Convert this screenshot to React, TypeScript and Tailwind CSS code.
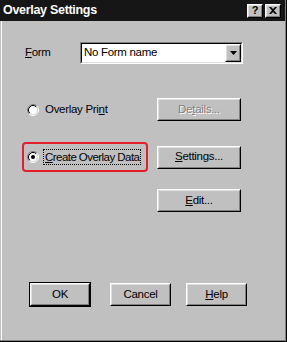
import React from "react";

const font = "font-['Liberation_Sans',Arial,sans-serif]";

function Raised({
  className = "",
  children,
}: {
  className?: string;
  children?: React.ReactNode;
}) {
  return (
    <div
      className={`border border-t-white border-l-white border-r-black border-b-black ${className}`}
    >
      <div className="flex h-full w-full items-center justify-center border border-t-[#dfdfdf] border-l-[#dfdfdf] border-r-[#808080] border-b-[#808080] bg-[#c0c0c0]">
        {children}
      </div>
    </div>
  );
}

function Radio({ checked }: { checked?: boolean }) {
  return (
    <svg width="12" height="12" viewBox="0 0 12 12" className="shrink-0">
      <circle cx="6" cy="6" r="4.2" fill="#fff" />
      <path d="M2.11 9.89 A5.5 5.5 0 0 1 9.89 2.11" fill="none" stroke="#808080" />
      <path d="M9.89 2.11 A5.5 5.5 0 0 1 2.11 9.89" fill="none" stroke="#fff" />
      <path d="M2.82 9.18 A4.5 4.5 0 0 1 9.18 2.82" fill="none" stroke="#000" />
      <path d="M9.18 2.82 A4.5 4.5 0 0 1 2.82 9.18" fill="none" stroke="#dfdfdf" />
      {checked && <circle cx="6" cy="6" r="2" fill="#000" />}
    </svg>
  );
}

function Btn({
  children,
  className = "",
}: {
  children: React.ReactNode;
  className?: string;
}) {
  return (
    <Raised className={`h-[23px] whitespace-nowrap text-black ${className}`}>
      {children}
    </Raised>
  );
}

export default function App() {
  return (
    <div
      className={`${font} h-[342px] w-[287px] border-r border-b border-r-black border-b-black bg-[#c0c0c0]`}
    >
      <div className="flex h-full flex-col border-r border-b border-r-[#808080] border-b-[#808080]">
        {/* title bar */}
        <div className="flex h-[21px] items-center bg-[#161616] pl-[3px] pr-[4px]">
          <span className="text-[12.5px] font-bold tracking-[-0.3px] text-white">
            Overlay Settings
          </span>
          <div className="ml-auto flex gap-[2px]">
            <Raised className="h-[14px] w-[16px]">
              <span className="text-[11px] font-bold leading-none text-black">?</span>
            </Raised>
            <Raised className="h-[14px] w-[16px]">
              <svg width="8" height="7" viewBox="0 0 8 7">
                <path d="M0 0h2l2 2 2-2h2L5 3.5 8 7H6L4 5 2 7H0l3-3.5z" fill="#000" />
              </svg>
            </Raised>
          </div>
        </div>

        {/* body */}
        <div className="ml-px flex flex-1 flex-col whitespace-nowrap border-l border-l-white text-[11.5px] tracking-[-0.3px] text-black">
          <div className="mt-[21px] flex items-center pl-[23px]">
            <span className="w-[55px]">
              <span className="underline">F</span>orm
            </span>
            <div className="h-[22px] w-[163px] border border-t-[#808080] border-l-[#808080] border-r-white border-b-white">
              <div className="flex h-full items-center border border-t-black border-l-black border-r-[#dfdfdf] border-b-[#dfdfdf] bg-white pl-[2px]">
                <span className="flex-1">No Form name</span>
                <Raised className="h-[18px] w-[16px]">
                  <svg width="7" height="4" viewBox="0 0 7 4">
                    <path d="M0 0h7L3.5 4z" fill="#000" />
                  </svg>
                </Raised>
              </div>
            </div>
          </div>

          <div className="mt-[34px] flex items-center pl-[20px]">
            <div className="flex w-[126px] items-center pl-[5px]">
              <Radio />
              <span className="ml-[6px]">
                Overlay Pri<span className="underline">n</span>t
              </span>
            </div>
            <Btn className="ml-[9px] w-[84px]">
              <span className="text-[#808080] [text-shadow:1px_1px_0_#fff]">
                De<span className="underline">t</span>ails...
              </span>
            </Btn>
          </div>

          <div className="mt-[21px] flex items-center pl-[20px]">
            <div className="flex h-[30px] w-[126px] items-center rounded-[4px] border-2 border-[#e41f2b] pl-[3px]">
              <Radio checked />
              <span className="ml-[4px] border border-dotted border-black px-px leading-[14px] tracking-[-0.55px]">
                <span className="underline">C</span>reate Overlay Data
              </span>
            </div>
            <Btn className="ml-[9px] w-[84px]">
              <span>
                <span className="underline">S</span>ettings...
              </span>
            </Btn>
          </div>

          <div className="mt-[17px] flex pl-[155px]">
            <Btn className="w-[84px]">
              <span>
                <span className="underline">E</span>dit...
              </span>
            </Btn>
          </div>

          <div className="mt-auto mb-[33px] flex items-center pl-[27px]">
            <div className="border border-black">
              <Btn className="w-[60px]">OK</Btn>
            </div>
            <Btn className="ml-[19px] w-[61px]">Cancel</Btn>
            <Btn className="ml-[15px] w-[61px]">
              <span>
                <span className="underline">H</span>elp
              </span>
            </Btn>
          </div>
        </div>
      </div>
    </div>
  );
}
